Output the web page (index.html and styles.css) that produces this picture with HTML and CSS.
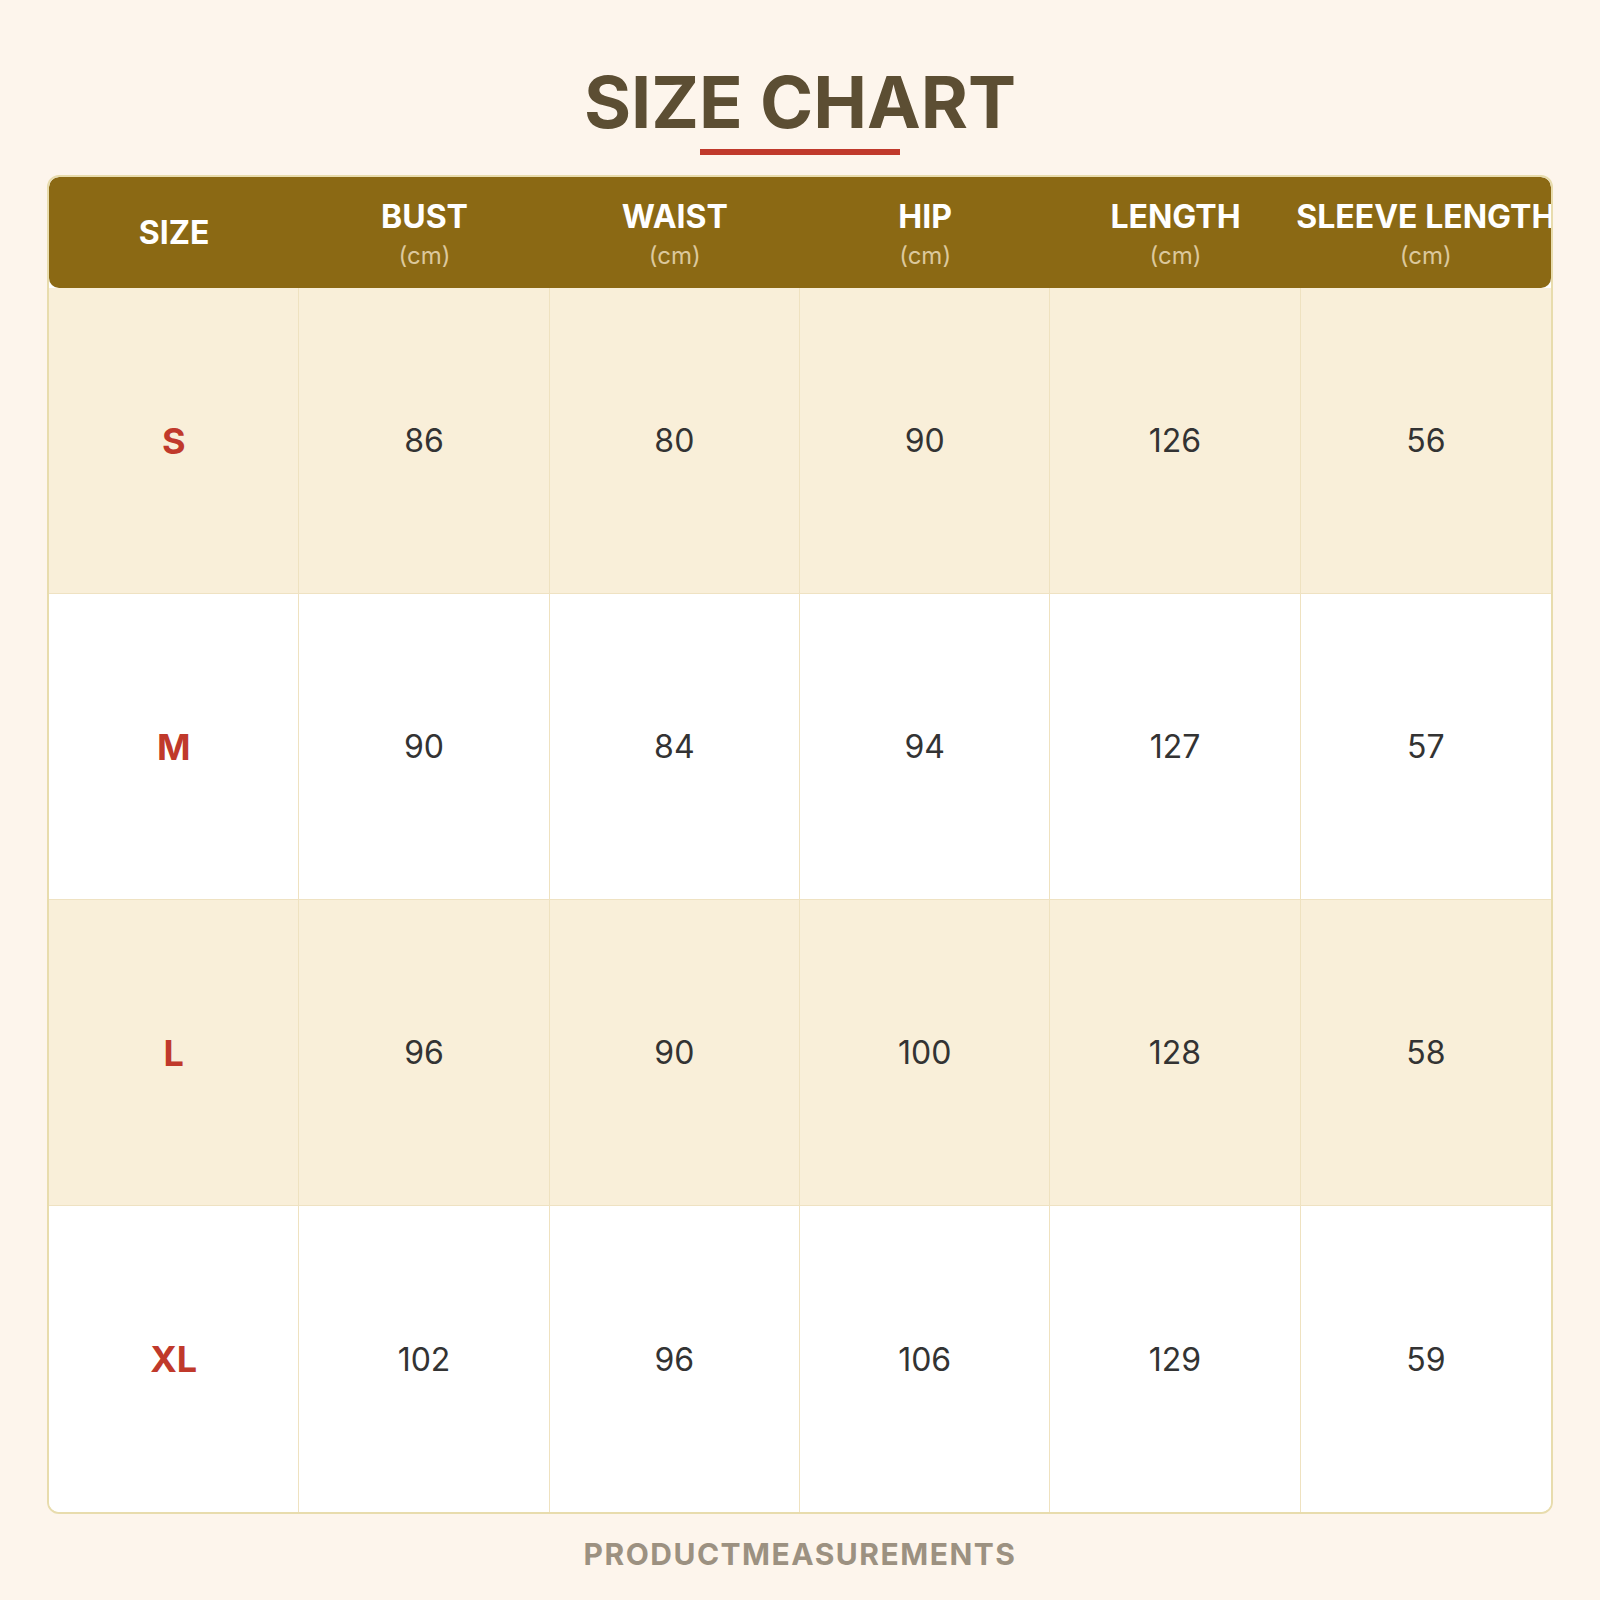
FILE: index.html
```html
<!DOCTYPE html>
<html lang="en">
<head>
<meta charset="utf-8">
<title>Size Chart</title>
<link rel="stylesheet" href="styles.css">
</head>
<body>
<main class="page">
  <h1 class="title">SIZE CHART</h1>
  <div class="title-rule"></div>
  <div class="chart">
    <div class="head-row">
      <div class="hcell"><span class="hname">SIZE</span></div>
      <div class="hcell has-unit"><span class="hname">BUST</span><span class="unit">(cm)</span></div>
      <div class="hcell has-unit"><span class="hname">WAIST</span><span class="unit">(cm)</span></div>
      <div class="hcell has-unit"><span class="hname">HIP</span><span class="unit">(cm)</span></div>
      <div class="hcell has-unit"><span class="hname">LENGTH</span><span class="unit">(cm)</span></div>
      <div class="hcell has-unit"><span class="hname">SLEEVE LENGTH</span><span class="unit">(cm)</span></div>
    </div>
    <div class="row alt">
      <div class="cell size">S</div><div class="cell">86</div><div class="cell">80</div><div class="cell">90</div><div class="cell">126</div><div class="cell">56</div>
    </div>
    <div class="row">
      <div class="cell size">M</div><div class="cell">90</div><div class="cell">84</div><div class="cell">94</div><div class="cell">127</div><div class="cell">57</div>
    </div>
    <div class="row alt">
      <div class="cell size">L</div><div class="cell">96</div><div class="cell">90</div><div class="cell">100</div><div class="cell">128</div><div class="cell">58</div>
    </div>
    <div class="row last">
      <div class="cell size">XL</div><div class="cell">102</div><div class="cell">96</div><div class="cell">106</div><div class="cell">129</div><div class="cell">59</div>
    </div>
  </div>
  <p class="footer">PRODUCTMEASUREMENTS</p>
</main>
</body>
</html>
```

FILE: styles.css
```css
html, body {
  margin: 0;
  padding: 0;
  background: #fdf5ec;
}

body {
  font-family: Inter, "Noto Sans", "Liberation Sans", sans-serif;
  color: #333333;
}

.page {
  padding: 58px 47px 0;
  display: flex;
  flex-direction: column;
  align-items: stretch;
}

.title {
  margin: 0;
  font-size: 72px;
  line-height: 87px;
  font-weight: 700;
  color: #5c4e33;
  text-align: center;
}

.title-rule {
  width: 200px;
  height: 6px;
  margin: 4px auto 0;
  background: #c0392b;
}

.chart {
  margin-top: 20px;
  border: 2px solid #e8dcad;
  border-radius: 12px;
  background: #ffffff;
  overflow: hidden;
  display: flex;
  flex-direction: column;
}

.head-row {
  display: grid;
  grid-template-columns: repeat(6, 1fr);
  height: 111px;
  background: #8b6914;
  border-radius: 10px;
}

.hcell {
  display: flex;
  flex-direction: column;
  align-items: center;
  justify-content: center;
  gap: 8px;
  white-space: nowrap;
  min-width: 0;
}

.hcell.has-unit {
  padding-top: 4px;
}

.hname {
  font-size: 32px;
  line-height: 34px;
  font-weight: 700;
  color: #ffffff;
}

.unit {
  font-size: 24px;
  line-height: 28px;
  font-weight: 400;
  color: #dcc89c;
}

.row {
  display: grid;
  grid-template-columns: repeat(6, 1fr);
  height: 305px;
  border-bottom: 1px solid #efe2c2;
  background: #ffffff;
}

.row.alt {
  background: #f9efd9;
}

.row.last {
  border-bottom: none;
  height: 306px;
}

.cell {
  display: flex;
  align-items: center;
  justify-content: center;
  font-size: 32px;
  font-weight: 400;
  color: #333333;
  border-right: 1px solid #efe2c0;
}

.cell:last-child {
  border-right: none;
}

.cell.size {
  font-size: 36px;
  font-weight: 700;
  color: #c0392b;
}

.footer {
  margin: 22px 0 0;
  text-align: center;
  font-size: 30px;
  line-height: 36px;
  font-weight: 700;
  color: #9c9181;
  letter-spacing: 1.5px;
}
```
